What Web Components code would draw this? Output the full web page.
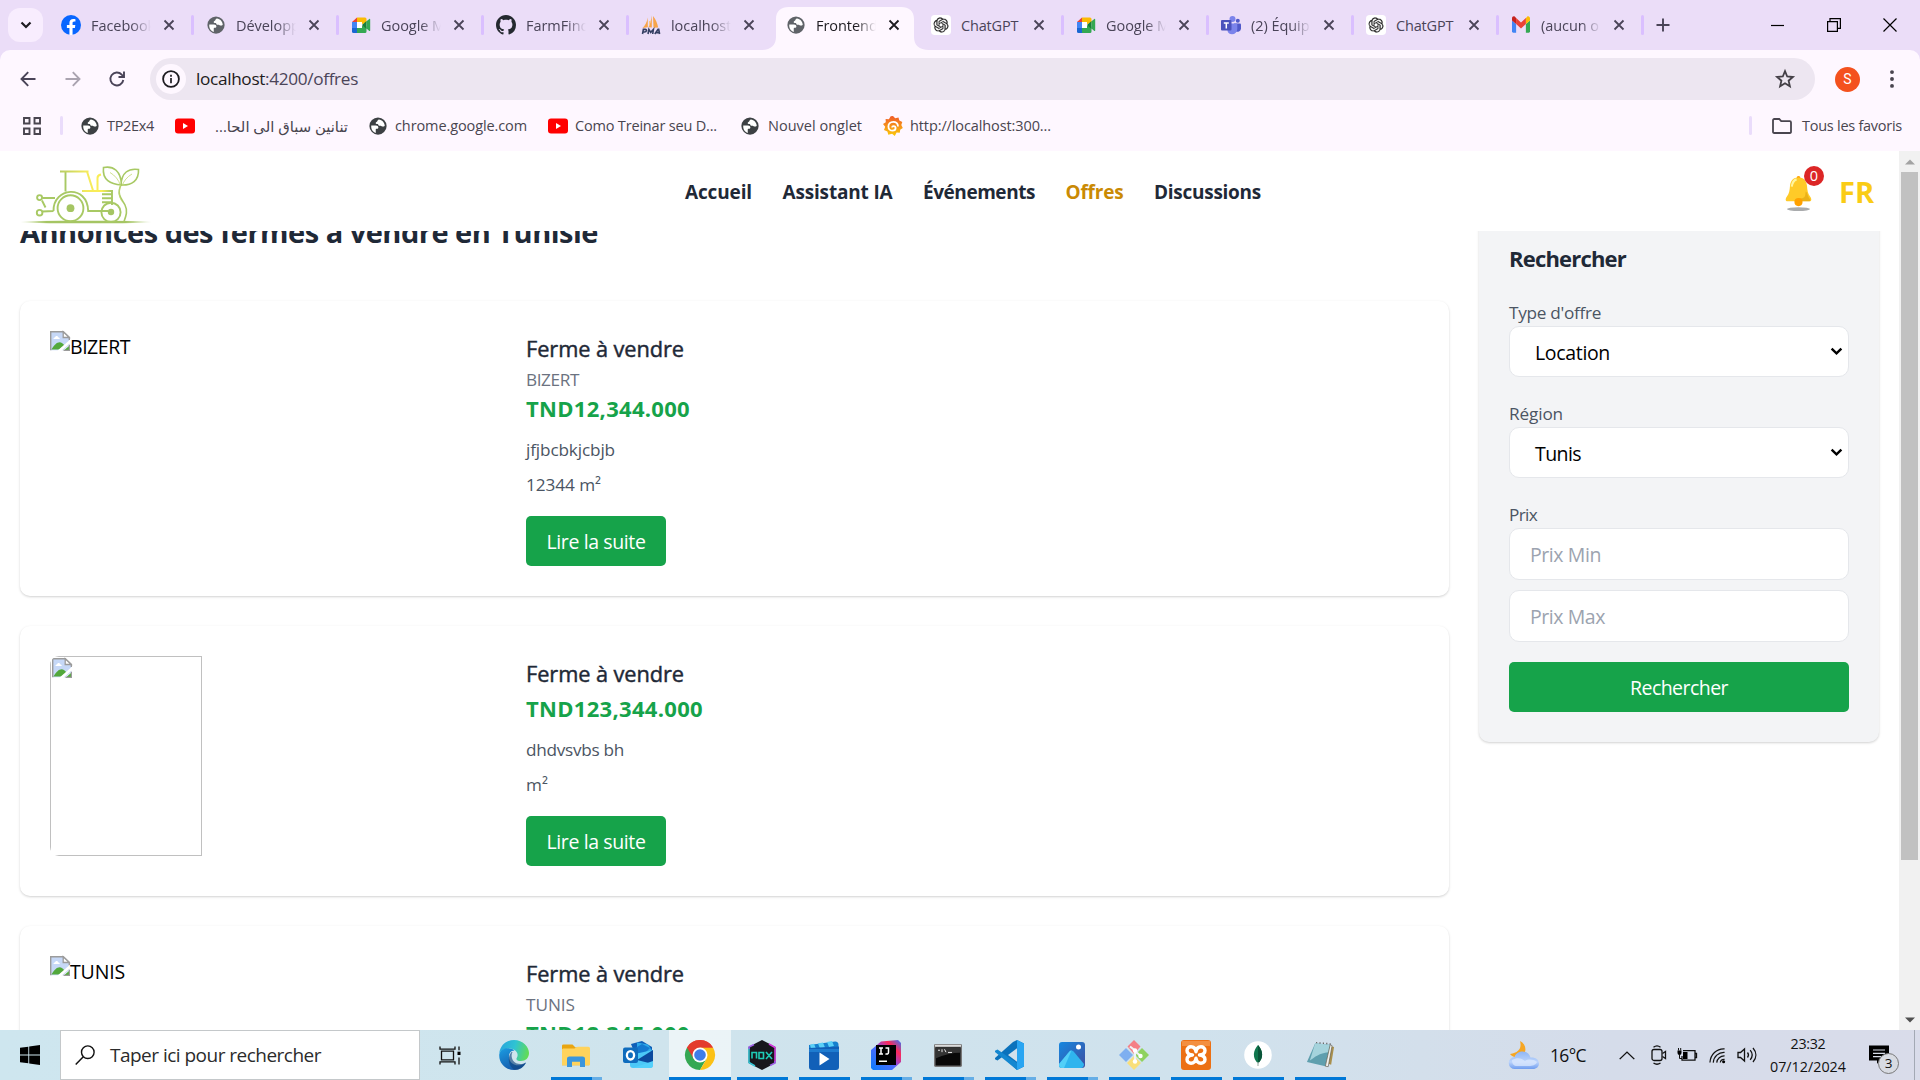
<!DOCTYPE html>
<html lang="fr">
<head>
<meta charset="utf-8">
<title>Frontend</title>
<style>
html,body{margin:0;padding:0;width:1920px;height:1080px;overflow:hidden;background:#fff;font-family:"Open Sans","Noto Sans","DejaVu Sans",sans-serif}
</style>
</head>
<body>
<desktop-screen></desktop-screen>
<script>
const def = (name, html, init) => customElements.define(name, class extends HTMLElement {
  connectedCallback() {
    if (this.shadowRoot) return;
    const root = this.attachShadow({ mode: 'open' });
    root.innerHTML = typeof html === 'function' ? html(this) : html;
    if (init) init(this, root);
  }
});

/* A single line of text: size in px, optional fitted width w, height h */
def('text-run', el => {
  const a = n => el.getAttribute(n);
  return `<style>:host{display:block;width:max-content;flex:none;white-space:nowrap;font-size:${a('size') || 16}px;
  font-weight:${a('weight') || 400};line-height:${a('h') || 24}px;height:${a('h') || 24}px;${a('color') ? 'color:' + a('color') : ''}}</style><slot></slot>`;
}, el => {
  const w = +el.getAttribute('w');
  if (!w) return;
  const n = [...el.textContent].length;
  const now = el.getBoundingClientRect().width;
  if (el.hasAttribute('scale')) el.style.fontSize = (+el.getAttribute('size') * w / now) + 'px';
  else el.style.letterSpacing = ((w - now) / n) + 'px';
  el.style.width = w + 'px';
});

const ICONS = {
  globe: `0 0 24 24|<circle cx="12" cy="12" r="11.5" fill="currentColor"/><path fill="#fff" d="M3 11.2h6.3c2 0 3.2 1.100 3.200 2.800 0 1-.7 1.700-1.900 1.700h-.8c-.5 0-.8.3-.8.8v4.700C5.500 20 2.500 16.500 3 11.200zM13.200 3.200c4.200.4 7.600 4 7.800 8.300-.6.9-1.400 1.300-2.500 1.300-1.600 0-1.900-1-2.900-1.200-.8-.2-1.700.2-2.600-.3-.8-.5-.5-1.600-1.400-2-.9-.4-2.200.2-2.600-.8-.4-1.100.9-1.700 1.700-2.400.7-.6.600-1.600 1.200-2.200.4-.4.800-.7 1.300-.7z"/>`,
  facebook: `0 0 24 24|<circle cx="12" cy="12" r="12" fill="#0866ff"/><path fill="#fff" d="M16.671 15.543l.532-3.47h-3.328V9.823c0-.949.465-1.874 1.956-1.874h1.513V4.996s-1.374-.235-2.686-.235c-2.741 0-4.533 1.662-4.533 4.669v2.642H7.078v3.47h3.047v8.385a12 12 0 0 0 3.75 0v-8.385z"/>`,
  github: `0 0 16 16|<path fill="#24292f" d="M8 0C3.580 0 0 3.580 0 8c0 3.540 2.290 6.530 5.470 7.590.4.070.55-.17.55-.38 0-.19-.01-.82-.01-1.490-2.010.37-2.530-.49-2.690-.94-.09-.23-.48-.94-.82-1.130-.28-.15-.68-.52-.01-.53.63-.01 1.080.58 1.230.82.72 1.210 1.870.87 2.330.66.07-.52.28-.87.51-1.070-1.780-.2-3.640-.89-3.640-3.950 0-.87.31-1.590.82-2.150-.08-.2-.36-1.020.08-2.120 0 0 .67-.21 2.200.82.64-.18 1.320-.27 2-.27s1.360.09 2 .27c1.530-1.040 2.200-.82 2.200-.82.44 1.100.16 1.920.08 2.120.51.56.82 1.270.82 2.150 0 3.070-1.870 3.750-3.650 3.950.29.25.54.73.54 1.480 0 1.070-.01 1.930-.01 2.200 0 .21.15.46.55.38A8.010 8.010 0 0 0 16 8c0-4.420-3.580-8-8-8z"/>`,
  meet: `0 0 20 20|<path fill="#fbbc04" d="M6 2.500h8a1.500 1.500 0 0 1 1.500 1.500v4l-4.500 1V7H6z"/><path fill="#ea4335" d="M6 2.500V7H1z"/><path fill="#4285f4" d="M1 7h5v6H1z"/><path fill="#1967d2" d="M1 13h5v5H2.500A1.500 1.500 0 0 1 1 16.500z"/><path fill="#34a853" d="M6 13h5v-2.500l4.500 1v5a1.500 1.500 0 0 1-1.500 1.500H6z"/><path fill="#188038" d="M11 10l4.500-4v8z"/><path fill="#34a853" d="M15.500 6.200l2.800-2.300c.4-.3.9 0 .9.5v11c0 .5-.5.8-.9.5l-2.800-2.300z"/><path fill="#fff" d="M6 7h5v6H6z"/>`,
  pma: `0 0 20 20|<path fill="#f7a54a" d="M6.800 2.500c-.8 4.500-2.600 8-5.300 10.500l5.300-.8zM10.800.3v12.200l-3.300-.2C9.200 8.500 10.300 4.500 10.800.3zM12 1c2.700 3.200 4.300 7 5.200 11.500l-4.700.2z"/><path fill="#fbc98a" d="M8 6v6l2-6z"/><g fill="none" stroke="#343f63" stroke-width="1.600"><path d="M1.500 19l.9-4.600h1.800c2 0 1.600 2.600-.6 2.600H2.200M7 19l.9-4.600 1.800 3 2.700-3L11.700 19M13.800 19l3.300-4.600h.6l.9 4.600M15 17.600h3.300"/></g>`,
  gpt: `-4 -4 32 32|<rect x="-4" y="-4" width="32" height="32" rx="6" fill="#fff"/><path fill="#222" stroke="#222" stroke-width=".3" d="M22.2819 9.8211a5.9847 5.9847 0 0 0-.5157-4.9108 6.0462 6.0462 0 0 0-6.5098-2.9A6.0651 6.0651 0 0 0 4.9807 4.1818a5.9847 5.9847 0 0 0-3.9977 2.9 6.0462 6.0462 0 0 0 .7427 7.0966 5.98 5.98 0 0 0 .511 4.9107 6.051 6.051 0 0 0 6.5146 2.9001A5.9847 5.9847 0 0 0 13.2599 24a6.0557 6.0557 0 0 0 5.7718-4.2058 5.9894 5.9894 0 0 0 3.9977-2.9001 6.0557 6.0557 0 0 0-.7475-7.0729zm-9.022 12.6081a4.4755 4.4755 0 0 1-2.8764-1.0408l.1419-.0804 4.7783-2.7582a.7948.7948 0 0 0 .3927-.6813v-6.7369l2.02 1.1686a.071.071 0 0 1 .038.052v5.5826a4.504 4.504 0 0 1-4.4945 4.4944zm-9.6607-4.1254a4.4708 4.4708 0 0 1-.5346-3.0137l.142.0852 4.783 2.7582a.7712.7712 0 0 0 .7806 0l5.8428-3.3685v2.3324a.0804.0804 0 0 1-.0332.0615L9.74 19.9502a4.4992 4.4992 0 0 1-6.1408-1.6464zM2.3408 7.8956a4.485 4.485 0 0 1 2.3655-1.9728V11.6a.7664.7664 0 0 0 .3879.6765l5.8144 3.3543-2.0201 1.1685a.0757.0757 0 0 1-.071 0l-4.8303-2.7865A4.504 4.504 0 0 1 2.3408 7.872zm16.5963 3.8558L13.1038 8.364 15.1192 7.2a.0757.0757 0 0 1 .071 0l4.8303 2.7913a4.4944 4.4944 0 0 1-.6765 8.1042v-5.6772a.79.79 0 0 0-.407-.667zm2.0107-3.0231l-.142-.0852-4.7735-2.7818a.7759.7759 0 0 0-.7854 0L9.409 9.2297V6.8974a.0662.0662 0 0 1 .0284-.0615l4.8303-2.7866a4.4992 4.4992 0 0 1 6.6802 4.66zM8.3065 12.863l-2.02-1.1638a.0804.0804 0 0 1-.038-.0567V6.0742a4.4992 4.4992 0 0 1 7.3757-3.4537l-.142.0805L8.704 5.459a.7948.7948 0 0 0-.3927.6813zm1.0976-2.3654l2.602-1.4998 2.6069 1.4998v2.9994l-2.5974 1.4997-2.6067-1.4997Z"/>`,
  teams: `0 0 20 20|<circle cx="16.800" cy="5.800" r="2" fill="#5059c9"/><path fill="#5059c9" d="M13 8.500h6a1 1 0 0 1 1 1v4a3.500 3.500 0 0 1-5 3z"/><circle cx="11.500" cy="4" r="3" fill="#7b83eb"/><path fill="#7b83eb" d="M7 8.500h8.500a.8.8 0 0 1 .8.8V14a5.300 5.300 0 0 1-5.300 5.300A5 5 0 0 1 6.500 16z"/><rect y="5" width="10.500" height="10.500" rx="1" fill="#4b53bc"/><path stroke="#fff" stroke-width="1.500" d="M2.800 8h5M5.300 8v5.500" fill="none"/>`,
  gmail: `0 0 24 20|<path fill="#4285f4" d="M1.600 18.500h3.900V9L0 4.900v12a1.600 1.600 0 0 0 1.600 1.600z"/><path fill="#34a853" d="M18.500 18.500h3.900A1.600 1.600 0 0 0 24 16.900v-12L18.500 9z"/><path fill="#fbbc04" d="M18.500 2.500V9L24 4.900V2.700C24 .7 21.700-.5 20.100.7z"/><path fill="#ea4335" d="M5.500 9V2.200L12 7.100l6.500-4.900V9L12 13.900z"/><path fill="#c5221f" d="M0 2.700v2.200L5.500 9V2.200L3.900.9C2.300-.3 0 .7 0 2.700z"/>`,
  x: `0 0 12 12|<path d="M1.500 1.500l9 9M10.500 1.500l-9 9" stroke="currentColor" stroke-width="1.800" fill="none"/>`,
  plus: `0 0 14 14|<path d="M7 .5v13M.5 7h13" stroke="currentColor" stroke-width="1.900"/>`,
  down: `0 0 12 8|<path d="M1.500 1.500L6 6l4.500-4.500" stroke="currentColor" stroke-width="2.200" fill="none"/>`,
  min: `0 0 14 14|<path d="M0 7.500h13" stroke="#000" stroke-width="1.200"/>`,
  restore: `0 0 14 14|<path d="M.6 3.600h9.800v9.800H.6zM3 3.500V.6h10.400v9.800h-2.900" fill="none" stroke="#000" stroke-width="1.200"/>`,
  close: `0 0 14 14|<path d="M.5.5l13 13M13.500.5l-13 13" stroke="#000" stroke-width="1.200"/>`,
  back: `0 0 16 16|<path d="M15.500 8H1.500M8.200 1.200L1.500 8l6.700 6.800" fill="none" stroke="currentColor" stroke-width="1.900"/>`,
  fwd: `0 0 16 16|<path d="M.5 8h14M7.800 1.200L14.500 8l-6.700 6.800" fill="none" stroke="currentColor" stroke-width="1.900"/>`,
  reload: `0 0 16 16|<path d="M14.300 9a6.500 6.500 0 1 1-1.600-5.400L14.500 5.500M15 .5V6H9.500" fill="none" stroke="currentColor" stroke-width="1.900"/>`,
  info: `0 0 18 18|<circle cx="9" cy="9" r="7.900" fill="none" stroke="#1d1b20" stroke-width="1.800"/><path d="M9 8v5.200M9 4.800v1.900" stroke="#1d1b20" stroke-width="1.700"/>`,
  star: `0 0 20 20|<path d="M10 2.200l2.200 5.300 5.700.5-4.300 3.700 1.300 5.600-4.900-3-4.900 3 1.300-5.600L2.100 8l5.700-.5z" fill="none" stroke="#444047" stroke-width="1.800"/>`,
  dots: `0 0 4 18|<g fill="#49454f"><circle cx="2" cy="2.100" r="1.950"/><circle cx="2" cy="9" r="1.950"/><circle cx="2" cy="15.900" r="1.950"/></g>`,
  apps: `0 0 18 18|<path d="M1 1h5.500v5.500H1zM11.500 1H17v5.500h-5.500zM1 11.500h5.500V17H1zM11.500 11.500H17V17h-5.500z" fill="none" stroke="#49454f" stroke-width="1.900"/>`,
  youtube: `0 0 20 14|<rect y="-.5" width="20" height="15" rx="3" fill="#f00"/><path d="M8 4v6l5-3z" fill="#fff"/>`,
  grafana: `0 0 20 20|<defs><linearGradient id="g" x1="0" y1="0" x2="0" y2="1"><stop stop-color="#f05a28"/><stop offset="1" stop-color="#fbca0a"/></linearGradient></defs><path fill="url(#g)" d="M10 0l2.200 2.200 3.300-.8.8 3 3 1.600-1 3 1.500 3-2.600 1.700-.4 3-3.200-.2L11.800 20l-2.700-2.200-3.800 1-.9-3.300L1 14l1.200-3.200L0 8l2.800-1.800L2.600 3l3.300.2L7.700.2z"/><path d="M15 10.500c0-3-2.300-4.700-4.700-4.700-3 0-4.900 2-4.900 4.600 0 2.700 2 4.300 4.200 4.300 2 0 3-1.300 3-2.600 0-1.200-.9-2-2-2-1 0-1.500.7-1.500 1.300" fill="none" stroke="#fff" stroke-width="1.800"/>`,
  folder: `0 0 20 16|<path d="M1 14V2.200A1.200 1.200 0 0 1 2.200 1h5l2 2.200h8.600A1.200 1.200 0 0 1 19 4.400V14a1 1 0 0 1-1.200 1H2.200A1.100 1.100 0 0 1 1 14z" fill="none" stroke="#49454f" stroke-width="1.800"/>`,
  broken: `0 0 20 20|<path d="M.7.7h12.600l6 5.600v8L13 19.300H.7z" fill="#c6d8f7"/><path d="M.7 19.300V.7h12.600l6 5.600V9" fill="none" stroke="#9b9b9b" stroke-width="1.400"/><path d="M13.200.7v5.800h6z" fill="#fff" stroke="#9b9b9b" stroke-width="1.300"/><path d="M3.500 8c0-1.300 1-1.600 1.500-1.500.3-2 3-2 3.300 0 .8-.1 1.500.5 1.500 1.500z" fill="#fff"/><path d="M1.400 18.600C4 14 7 11.300 9.500 11.300c2 0 3.700 1.400 5 3.200l-5 4.100z" fill="#52a83c"/><path d="M8.500 20.500l12-10.500" stroke="#fff" stroke-width="2.600"/><path d="M14 19.300h5.300v-4.600z" fill="#52a83c"/><path d="M13.500 19.400h5.900v-5.600" fill="none" stroke="#9b9b9b" stroke-width="1.200"/>`,
  tractor: `16 160 140 66|<defs><linearGradient id="gd" gradientUnits="userSpaceOnUse" x1="20" y1="0" x2="152" y2="0"><stop stop-color="#a5c563" stop-opacity="0"/><stop offset=".2" stop-color="#a5c563"/><stop offset=".8" stop-color="#a5c563"/><stop offset="1" stop-color="#a5c563" stop-opacity="0"/></linearGradient><linearGradient id="cb" gradientUnits="userSpaceOnUse" x1="60" y1="0" x2="112" y2="0"><stop stop-color="#b7cd62"/><stop offset=".5" stop-color="#f4ea5c"/><stop offset=".8" stop-color="#fbee55"/><stop offset="1" stop-color="#a8c864"/></linearGradient></defs>
   <ellipse cx="86" cy="222" rx="66" ry="1.300" fill="url(#gd)"/><g fill="none" stroke="#a8c964" stroke-width="1.900"><circle cx="70.500" cy="208.200" r="12.900"/><circle cx="111" cy="212.300" r="9.600"/><path d="M53.500 211c-.5-24 34-27 34.700 0H108M65.500 171v20.500M42.500 198H55M42 200.500l3.500 7M42.500 211.500l11-.5M112 190v15M102 194.300h9.500M102 198.300h9.500M102 202.300h9.500"/><circle cx="39.600" cy="197.600" r="2.500"/><circle cx="39.600" cy="212.700" r="2.800"/><path d="M103.500 167.500c10-2 17.500 3.500 18 17.500-11-1-19.500-5-18-17.500zM138.500 169.500c-10-1.500-17 3-17.500 15.500 11 .5 18-4.500 17.500-15.500zM121 185c-5 10 1.500 15 4 20 3 6 1 11-1 16.500" stroke-width="1.600"/><path d="M110 172.500c5 3 8.500 7 10.500 13-1.500 6-2 11 1.500 16M132 174c-5 3-8 6.500-10 12" stroke-width=".8" stroke="#c4d873"/></g><g fill="#a5c563"><circle cx="70.500" cy="208.200" r="3.900"/><circle cx="111" cy="212" r="3.200"/></g>
   <path d="M60 171.500h28.500M87 171.500l6 19M82 191h30.500M97.500 191v-13c0-2 1-3 3.500-3.500" fill="none" stroke="url(#cb)" stroke-width="2"/>`,
  bell: `0 0 28 38|<ellipse cx="14" cy="35" rx="12" ry="2" fill="#a9abad"/><circle cx="14" cy="3" r="2" fill="#ffa000"/><path d="M14 2.500c5.500 0 8.300 3.500 8.800 8.500.4 5 .8 8 3.200 11 1.500 2 2.200 5-1 5H3c-3.200 0-2.500-3-1-5 2.400-3 2.800-6 3.200-11 .5-5 3.300-8.500 8.800-8.500z" fill="#ffca28"/><path d="M21.500 17c2 1 1.500 4 3.500 6.500 1.500 2 1.500 3.500-.5 3.500H9.500c1.500-2 5-3 8.500-3 3.500-1 3-4 3.500-7z" fill="#e2a610" opacity=".7"/><path d="M7 12c.5-4 2-6.500 5-7.500" fill="none" stroke="#fff59d" stroke-width="2.200"/><circle cx="14" cy="27.800" r="4.200" fill="#ffa000"/>`,
  windows: `0 0 20 20|<path d="M0 2.800L8.300 1.700v7.800H0zM9.200 1.500L20 0v9.500H9.200zM0 10.400h8.300v7.900L0 17.200zM9.200 10.400H20V20L9.200 18.500z"/>`,
  search: `0 0 20 20|<circle cx="12.800" cy="7.200" r="6.300" fill="none" stroke="#111" stroke-width="1.400"/><path d="M8.300 11.800L.7 19.500" stroke="#111" stroke-width="1.500"/>`,
  taskview: `0 0 22 20|<path d="M2.500 5.500h12v9h-12zM1 .5v2.700h15V.5M1 19.500v-2.700h15v2.700M20 .5v4M20 12v7.500" fill="none" stroke="#111" stroke-width="1.300"/><path d="M18.500 6h3v3.500h-3z"/>`,
  edge: `0 0 30 30|<defs><linearGradient id="e1" x1="0" y1=".3" x2="1" y2=".5"><stop stop-color="#2aa5dc"/><stop offset=".5" stop-color="#2fc3d3"/><stop offset="1" stop-color="#62dc54"/></linearGradient><linearGradient id="e2" x1="0" y1="0" x2=".6" y2="1"><stop stop-color="#1b9de2"/><stop offset="1" stop-color="#1556a8"/></linearGradient></defs><path d="M.3 13.500C1 5.500 7 0 15 0c9 0 15 7 15 13 0 5-3.500 8-8 8-4 0-5.500-1.500-4-3.500 2-4-1-8.500-7-9-5-.2-9 2-10.700 5z" fill="url(#e1)"/><path d="M.3 14C2 8 11 6.500 15.500 10.500c-5 0-6.500 5-5 9C12 24.500 19 28 27 22.500c-2 4.500-6.500 7.500-12 7.500C6 30-.5 22.500.3 14z" fill="url(#e2)"/><path d="M12.500 12C8 17 9 26.500 16 30c5 0 9-3 11-7.500-5 3-10.500 1.500-13-2-1.500-2.500-2-6-.5-8.500z" fill="#11467f" opacity=".65"/>`,
  explorer: `0 0 28 26|<path d="M0 2a1.500 1.500 0 0 1 1.500-1.500h9L13.500 4H27v20H0z" fill="#e9a511"/><path d="M1 5h11.500l3-2h10.800A1.700 1.700 0 0 1 28 4.700V24H0V6z" fill="#ffd35c"/><path d="M5 26v-9.500a2.500 2.500 0 0 1 2.500-2.500h13a2.500 2.500 0 0 1 2.500 2.500V26h-5v-6h-8v6z" fill="#3a96dd"/>`,
  outlook: `0 0 30 30|<path d="M8 4L19 1l10 6v6L14 19z" fill="#0f5fb8"/><path d="M14 2.500l11 2 4 6-15 8z" fill="#2da8e8"/><path d="M9 10l10-6 8 4-9 9z" fill="#1479d0"/><path d="M7 15l23-5v15a3 3 0 0 1-3 3H10a3 3 0 0 1-3-3z" fill="#4bc8f7"/><path d="M30 10L14 20l16 4z" fill="#0c4a9e"/><path d="M10 28l20-7v4c0 2-1 3-3 3z" fill="#53d0fb"/><rect y="7.500" width="15" height="15.500" rx="2" fill="#0f6cbd"/><ellipse cx="7.500" cy="15.300" rx="3.600" ry="4.200" fill="none" stroke="#fff" stroke-width="2.300"/>`,
  chrome: `0 0 30 30|<path d="M15 15L2 7.500A15 15 0 0 1 28 7.500z" fill="#ea4335"/><path d="M15 15L2 7.500A15 15 0 0 0 15 30l6.500-11.200z" fill="#34a853"/><path d="M15 15V7.500h13A15 15 0 0 1 15 30l6.500-11z" fill="#fbc116"/><path d="M2 7.500l6.600 11.300L15 7.500h13A15 15 0 0 0 2 7.500z" fill="#e33b2e"/><circle cx="15" cy="15" r="7.500" fill="#fff"/><circle cx="15" cy="15" r="5.800" fill="#3f7de8"/>`,
  nox: `0 0 30 30|<path d="M15 0l13.500 7v16L15 30 1.500 23V7z" fill="#17171c"/><path d="M2 7.500v15L8 26" fill="none" stroke="#36c8d8" stroke-width="1.500"/><path d="M28 22.500v-15L22 4" fill="none" stroke="#d73be0" stroke-width="1.500"/><path d="M2 9V7l5-2.500M28 21v2l-5 2.500" fill="none" stroke="#a060e8" stroke-width="1.500"/><path d="M5 18.500v-6h4.500v6M12 12.500h4.500v6H12zM19 12l6 7M25 12l-6 7" fill="none" stroke="#1ecbb6" stroke-width="1.600"/>`,
  film: `0 0 30 30|<path d="M0 5L26 1.500a3 3 0 0 1 3.500 3V10H0z" fill="#1580ce"/><path d="M1 4.800l4-1 2 5H2zM9 3.400l5-1 2 5-5 1zM18 2l5-1 2 5-5 1z" fill="#5bd0f7"/><path d="M0 8l30-1.500V27a3 3 0 0 1-3 3H3a3 3 0 0 1-3-3z" fill="#1160b8"/><path d="M0 9h30v3H0z" fill="#1e7cd0"/><path d="M10.500 12.500v13L20.500 19z" fill="#fff"/>`,
  idea: `0 0 30 30|<defs><linearGradient id="ij" x1="0" y1="1" x2="1" y2="0"><stop stop-color="#087cfa"/><stop offset=".45" stop-color="#4c6bfd"/><stop offset=".55" stop-color="#a043c8"/><stop offset=".75" stop-color="#fe2857"/><stop offset="1" stop-color="#2d7bff"/></linearGradient></defs><path d="M0 10L10 1.500 27 0l3 3v19l-9 8H2l-2-2z" fill="url(#ij)"/><path d="M5 5h20v20H5z" fill="#000"/><path d="M8 8h4M10 8v6M8 14h4M14.500 8h3v4.500c0 1.500-1.500 2-3 1.300M8 21.200h8" fill="none" stroke="#fff" stroke-width="1.500"/>`,
  cmd: `0 0 28 24|<rect width="28" height="24" rx="1.500" fill="#777"/><path d="M1.500 3.500h25v19h-25z" fill="#080808"/><path d="M1.500 4h25v5c-8 0-17 2-25 6z" fill="#343434"/><path d="M1 .8h26v2H1z" fill="#ddd"/><path d="M4 6.500h2M8 5.500v3M10.500 5.500l1.500 3M14 8.800h4" stroke="#eee" stroke-width="1"/>`,
  vscode: `0 0 30 30|<path d="M22 0l7 3.400v23.200L22 30 7.500 16.700 2.500 20.500 0 19.200V18L18 2z" fill="#0b72bc"/><path d="M0 10.800l2.500-1.400L22 23v7L0 12z" fill="#1487d0"/><path d="M22 0l7 3.400v23.200L22 30z" fill="#29a5f2"/><path d="M22 8.300v13.400L13 15z" fill="#d2e0ec"/>`,
  photos: `0 0 28 28|<defs><linearGradient id="ph" x1="0" y1="0" x2="1" y2="1"><stop stop-color="#1688e0"/><stop offset="1" stop-color="#3e4da0"/></linearGradient></defs><rect x="1" y="1" width="26" height="26" rx="3" fill="url(#ph)"/><path d="M1 23l10-12c2-2 3-2 5 0l10 12c0 2-1 4-3 4H4a3 3 0 0 1-3-3z" fill="#2fb4ee"/><path d="M1 23l10-12c1-1 2-1.500 2.500-1.400L6 27H4a3 3 0 0 1-3-3z" fill="#52cff8"/><circle cx="20.500" cy="6" r="2.500" fill="#fff"/>`,
  git: `0 0 30 30|<path d="M15 0l6.500 6.500L15 14 8.500 6.500z" fill="#f57f86"/><path d="M7 8l7 7-7 7-7-7z" fill="#7eaff0"/><path d="M23 8l7 7-7 7-7-7z" fill="#8fd25f"/><path d="M15 16l7 7-7 7-7-7z" fill="#f9df7a"/><path d="M11 6.500l5 4v11M16 11l5.500 5" fill="none" stroke="#f0f3f6" stroke-width="2.200"/><g fill="#fff"><circle cx="16" cy="10.500" r="2.200"/><circle cx="21.500" cy="16" r="2.200"/><circle cx="16" cy="21.500" r="2.200"/></g>`,
  xampp: `0 0 30 30|<rect width="30" height="30" rx="3" fill="#ec7014"/><path d="M1 1h28v5H1z" fill="#f9a45f" opacity=".6"/><path d="M11.500 15C7 14.500 6 12.500 6 10.500 6 8 8 6.800 10 6.800c2.500 0 4.500 1.700 5 5 .5-3.300 2.500-5 5-5 2 0 4 1.200 4 3.700 0 2-1 4-5.500 4.500 4.500.5 5.500 2.500 5.500 4.500 0 2.500-2 3.700-4 3.700-2.500 0-4.500-1.700-5-5-.5 3.300-2.500 5-5 5-2 0-4-1.200-4-3.700 0-2 1-4 5.500-4.500z" fill="none" stroke="#fff" stroke-width="3.400" stroke-linejoin="round"/>`,
  mongo: `0 0 28 28|<circle cx="14" cy="14" r="13.800" fill="#fff"/><path d="M14 4c5 5.500 6 13 0 18.500C8 17 9 9.500 14 4z" fill="#10774e"/><path d="M14 4c5 5.500 6 13 0 18.500z" fill="#0a5539"/><path d="M14 21v4" stroke="#aebbb4" stroke-width="1.300"/>`,
  notepad: `0 0 30 30|<path d="M24 5l5 1.500-3 19-5-2z" fill="#a98f4c"/><path d="M9.500 2.500L25 4l-5 23L1 22.500z" fill="#5f9fae"/><path d="M9.500 2.500L25 4l-2 8C14 13 9 17 4 21z" fill="#a5d3dc"/><path d="M20 27l5-23 2 1-4 22.500z" fill="#f2f1ec" stroke="#5c5a50" stroke-width=".7"/><path d="M11 2.500v-1.500M14.500 3V1.300M18 3.200V1.600M21.500 3.500V2M25 4V2.500" stroke="#666" stroke-width="1.200"/>`,
  weather: `0 0 30 30|<defs><linearGradient id="cl" x1="0" y1="0" x2="0" y2="1"><stop stop-color="#8fb6f6"/><stop offset=".6" stop-color="#bcd4fb"/><stop offset="1" stop-color="#6f9df0"/></linearGradient></defs><path d="M11 1c6 3 7 10 3 14s-10 3-13-1c9-1 12-6 10-13z" fill="#f6a623"/><path d="M6 29a6 6 0 0 1-.5-12c1.500-4 5-5.500 8-5.500 4 0 7 2.500 8 6 4-.5 8.500 1.500 8.500 6 0 3-2.500 5.500-6 5.500z" fill="url(#cl)"/><path d="M3 20c5-3 10-2 13 1 3-2 8-2 12 1-1 3-5 4-8 4H8c-3 0-5-2-5-6z" fill="#dbe8fd" opacity=".75"/>`,
  chevup: `0 0 16 10|<path d="M.7 9L8 1.300 15.300 9" fill="none" stroke="#111" stroke-width="1.400"/>`,
  cam: `0 0 16 20|<rect x="1" y="4.500" width="10" height="11" rx="2" fill="none" stroke="#111" stroke-width="1.300"/><path d="M11.500 8.500l3-2v7l-3-2M2.500 2.200c2-1.600 5-1.600 7 0M2.500 18c2 1.400 5 1.400 7 0" fill="none" stroke="#111" stroke-width="1.300"/>`,
  battery: `0 0 20 16|<path d="M6 3.700h12v9.500H5V9M18.500 6.500h1v4h-1" fill="none" stroke="#111" stroke-width="1.300"/><path d="M6 5h4.500v7H6zM.5 3.500h4V6a2 2 0 0 1-4 0z"/><path d="M1.500 1v2.500M3.700 1v2.500M2.500 8v3.500H5" fill="none" stroke="#111"/>`,
  wifi: `0 0 18 18|<g fill="none" stroke="#111" stroke-width="1.300"><path d="M1 16.500C1.500 8 8 1.500 16.500 2M4.500 16.500C5 10 10 5.500 16.500 5.800M8.200 16.500c.3-4 4-7.200 8.300-7M12 16.500c.1-2 2-3.500 4.500-3.400"/></g><circle cx="15.500" cy="15.500" r="1.600"/>`,
  volume: `0 0 20 16|<path d="M1 5.500h2.500L7.500 2v12l-4-3.500H1zM10.500 5.500c1.200 1.500 1.200 3.500 0 5M13.200 3.200c2.500 3 2.500 6.600 0 9.600M16 1c3.800 4.300 3.800 9.700 0 14" fill="none" stroke="#111" stroke-width="1.300"/>`,
  notif: `0 0 20 20|<path d="M0 .5h20v15h-9.500L8 19v-3.500H0z"/><path d="M4 5h12M4 8.300h12M4 11.600h8" stroke="#d7dce8" stroke-width="1.200"/>`,
  tabshape: `0 0 169 43|<path d="M0 43c10 0 15-5 15-13V12C15 4 20 0 28 0h112c8 0 13 4 13 12v18c0 8 5 13 15 13z" fill="#fef7ff"/>`,
  up: `0 0 10 6|<path d="M0 5.500L5 .5l5 5z" fill="#a3a3a3"/>`,
  dn: `0 0 10 6|<path d="M0 .5l5 5 5-5z" fill="#505050"/>`
};
/* Inline SVG icon: name, width w, height h */
def('ui-icon', el => {
  const [vb, body] = ICONS[el.getAttribute('name')].split('|');
  const w = el.getAttribute('w') || 20, h = el.getAttribute('h') || w;
  return `<style>:host{display:block;flex:none;width:${w}px;height:${h}px}svg{display:block;overflow:visible}</style>
  <svg width="${w}" height="${h}" viewBox="${vb}" preserveAspectRatio="none">${body}</svg>`;
});

def('browser-tab', el => {
  const act = el.hasAttribute('active');
  return `<style>
  :host{display:flex;align-items:center;box-sizing:border-box;width:145px;height:50px;padding:0 0 0 13px;position:relative;flex:none;color:${act ? '#1d1b20' : '#4a4458'}}
  .i{width:20px;display:flex;justify-content:center;z-index:1;margin-right:10px;color:#5f6368}
  .t{width:63px;padding-top:1px;overflow:hidden;z-index:1;letter-spacing:-.05px;-webkit-mask:linear-gradient(90deg,#000 40px,transparent 60px);mask:linear-gradient(90deg,#000 40px,transparent 60px)}
  .t.full{-webkit-mask:none;mask:none}
  .c{margin-left:9px;z-index:1}
  .sep{position:absolute;right:-1px;top:15px;width:3px;height:20px;border-radius:2px;background:#dabfff}
  .bg{position:absolute;left:-12px;top:7px}
  </style>${act ? '<ui-icon class="bg" name="tabshape" w="169" h="43"></ui-icon>' : ''}
  <div class="i"><ui-icon name="${el.getAttribute('icon')}" w="${el.getAttribute('iw') || 20}"></ui-icon></div>
  <div class="t ${el.hasAttribute('w') ? 'full' : ''}"><text-run size="14.500" h="24" ${el.hasAttribute('w') ? `w="${el.getAttribute('w')}"` : ''}>${el.getAttribute('label')}</text-run></div>
  <ui-icon class="c" name="x" w="12"></ui-icon>${el.hasAttribute('nosep') ? '' : '<div class="sep"></div>'}`;
});

def('tab-strip', `<style>
:host{display:flex;align-items:center;height:50px;background:#ebddf8;flex:none}
.m{width:35px;height:34px;border-radius:12px;background:#f8edfe;margin:0 5px 0 8px;display:flex;align-items:center;justify-content:center;color:#1d1b20}
.p{margin-left:13px;color:#4a4458}.w{margin-left:101px;display:flex;gap:42px}
</style>
<div class="m"><ui-icon name="down" w="12" h="8"></ui-icon></div>
<browser-tab icon="facebook" label="Facebook"></browser-tab>
<browser-tab icon="globe" iw="18" label="Développ"></browser-tab>
<browser-tab icon="meet" label="Google M"></browser-tab>
<browser-tab icon="github" label="FarmFind"></browser-tab>
<browser-tab icon="pma" label="localhost" nosep></browser-tab>
<browser-tab icon="globe" iw="18" label="Frontend" active nosep></browser-tab>
<browser-tab icon="gpt" label="ChatGPT" w="57"></browser-tab>
<browser-tab icon="meet" label="Google M"></browser-tab>
<browser-tab icon="teams" label="(2) Équip"></browser-tab>
<browser-tab icon="gpt" label="ChatGPT" w="57"></browser-tab>
<browser-tab icon="gmail" iw="18" label="(aucun o"></browser-tab>
<ui-icon class="p" name="plus" w="14"></ui-icon>
<div class="w"><ui-icon name="min" w="14"></ui-icon><ui-icon name="restore" w="14"></ui-icon><ui-icon name="close" w="14"></ui-icon></div>`);

def('address-bar', `<style>
:host{display:block;height:50px;background:#ebddf8;flex:none}
.r{height:50px;display:flex;align-items:center;background:#fef7ff;border-radius:10px 10px 0 0;padding:8px 0 0 20px;box-sizing:border-box;color:#4a4458}
.o{height:42px;width:1665px;box-sizing:border-box;border-radius:21px;background:#ede6f1;display:flex;align-items:center;margin-left:25px;padding:0 20px 0 6px}
.n{width:30px;height:30px;border-radius:50%;background:#fef7ff;display:flex;align-items:center;justify-content:center;margin-right:10px}
.a{width:25px;height:25px;border-radius:50%;background:#f4511e;margin:0 30px 0 20px;display:flex;justify-content:center}
.u{flex:1;display:flex}b{font-weight:400;color:#1d1b20}
</style><div class="r">
<ui-icon name="back" w="16"></ui-icon><ui-icon name="fwd" w="16" style="margin-left:29px;color:#aaa3b0"></ui-icon><ui-icon name="reload" w="16" style="margin-left:28px"></ui-icon>
<div class="o"><div class="n"><ui-icon name="info" w="18"></ui-icon></div><div class="u"><text-run size="17.200" w="162" color="#4a4458"><b>localhost</b>:4200/offres</text-run></div><ui-icon name="star" w="20"></ui-icon></div>
<div class="a"><text-run size="14" h="25" color="#fff" style="font-family:Roboto">S</text-run></div><ui-icon name="dots" w="4" h="18"></ui-icon></div>`);

def('bookmark-bar', `<style>
:host{display:flex;align-items:center;height:51px;background:#fef7ff;flex:none;box-sizing:border-box;padding:0 18px 0 23px;color:#49454f}
.s{width:3px;height:19px;border-radius:2px;background:#eadcfb}.g{color:#3c4043}
</style>
<ui-icon name="apps" w="18"></ui-icon><div class="s" style="margin:0 18px 0 19px"></div>
<ui-icon class="g" name="globe" w="18"></ui-icon><text-run size="14.500" w="47" style="margin-left:8px">TP2Ex4</text-run>
<ui-icon name="youtube" w="20" h="14" style="margin-left:21px"></ui-icon><text-run size="14" w="133" scale dir="rtl" style="margin-left:20px">تنانين سباق الى الحا...</text-run>
<ui-icon class="g" name="globe" w="18" style="margin-left:21px"></ui-icon><text-run size="14.500" w="132" style="margin-left:8px">chrome.google.com</text-run>
<ui-icon name="youtube" w="20" h="14" style="margin-left:21px"></ui-icon><text-run size="14.500" w="142" style="margin-left:7px">Como Treinar seu D...</text-run>
<ui-icon class="g" name="globe" w="18" style="margin-left:24px"></ui-icon><text-run size="14.500" w="94" style="margin-left:9px">Nouvel onglet</text-run>
<ui-icon name="grafana" w="20" style="margin-left:21px"></ui-icon><text-run size="14.500" w="141" style="margin-left:7px">http://localhost:300...</text-run>
<div class="s" style="margin-left:auto"></div><ui-icon name="folder" w="20" h="16" style="margin:0 10px 0 20px"></ui-icon><text-run size="14.500" w="100">Tous les favoris</text-run>`);

def('site-header', `<style>
:host{display:flex;align-items:center;height:80px;background:#fff;box-sizing:border-box;padding-left:16px;flex:none;position:relative;z-index:2;color:#1f2937}
nav{display:flex;gap:30.500px;margin:1px 0 0 529px}
.logo{align-self:flex-start;margin-top:9px}
.bell{position:relative;margin:4px 27px 0 auto}
.badge{position:absolute;left:19px;top:-9px;width:20px;height:20px;border-radius:50%;background:#dc2626;display:flex;justify-content:center}
.fr{margin:2px 25px 0 0}
</style><ui-icon class="logo" name="tractor" w="140" h="66"></ui-icon>
<nav><text-run size="19" weight="700" w="67">Accueil</text-run><text-run size="19" weight="700" w="110">Assistant IA</text-run><text-run size="19" weight="700" w="112">Événements</text-run><text-run size="19" weight="700" w="58" color="#ca8a04">Offres</text-run><text-run size="19" weight="700" w="107">Discussions</text-run></nav>
<div class="bell"><ui-icon name="bell" w="27" h="37"></ui-icon><div class="badge"><text-run size="14.500" h="20" color="#fff">0</text-run></div></div>
<text-run class="fr" size="29" weight="700" h="36" w="35" color="#facc15">FR</text-run>`);

/* Green action button */
def('green-button', el => `<style>:host{display:flex;justify-content:center;width:${el.getAttribute('bw')}px;height:50px;border-radius:5px;background:#16a34a;color:#fff}</style>
<text-run size="19.500" h="52" w="${el.getAttribute('w')}">${el.getAttribute('label')}</text-run>`);

def('offer-card', el => {
  const a = n => el.getAttribute(n), place = a('place');
  return `<style>
  :host{display:flex;box-sizing:border-box;width:1429px;min-height:270px;padding:30px;border-radius:10px;background:#fff;box-shadow:0 1px 3px rgba(0,0,0,.13),0 1px 2px rgba(0,0,0,.06);flex:none}
  .pic{width:476px;height:200px;display:flex;align-items:flex-start}
  .clip{overflow:hidden;border-radius:9px 0 0 9px}
  .box{width:150px;height:198px;box-sizing:content-box;border:1px solid #c0c0c0}
  .box ui-icon{margin:1px 0 0 1px}
  .name{-webkit-text-stroke:.45px #1f2937}
  </style><div class="pic">${place ? `<ui-icon name="broken" w="20"></ui-icon><text-run size="19.500" h="32" w="${a('aw')}">${place}</text-run>` : '<div class="clip"><div class="box"><ui-icon name="broken" w="20"></ui-icon></div></div>'}</div>
  <div><text-run class="name" size="21.800" h="36" w="158" color="#1f2937">Ferme à vendre</text-run>
  ${place ? `<text-run size="17.200" h="25" w="${a('pw')}" color="#6b7280">${place}</text-run>` : ''}
  <text-run size="22" weight="700" h="33" w="${a('cw')}" color="#16a34a">${a('cost')}</text-run>
  ${a('desc') ? `<text-run size="17.200" h="29" w="${a('dw')}" color="#4b5563" style="margin-top:10px">${a('desc')}</text-run>
  <text-run size="17.200" h="41" w="${a('mw')}" color="#4b5563">${a('area')}</text-run>
  <green-button bw="140" w="99" label="Lire la suite" style="margin-top:11px"></green-button>` : ''}</div>`;
});

def('form-field', el => {
  const a = n => el.getAttribute(n), sel = el.hasAttribute('select');
  return `<style>:host{display:flex;box-sizing:border-box;width:340px;height:${sel ? 51 : 52}px;border:1px solid #e5e7eb;border-radius:10px;background:#fff;align-items:center;justify-content:space-between;padding:0 5px 0 ${sel ? 25 : 20}px;color:${sel ? '#000' : '#9ca3af'}}text-run{padding-top:2px}</style>
  <text-run size="19.500" h="28" w="${a('w')}">${a('value')}</text-run>${sel ? '<ui-icon name="down" w="13" h="8.500"></ui-icon>' : ''}`;
});

def('search-panel', `<style>
:host{display:block;box-sizing:border-box;width:400px;height:531px;padding:31px 30px 0 30px;background:#f3f4f6;border-radius:10px;box-shadow:0 1px 3px rgba(0,0,0,.13),0 1px 2px rgba(0,0,0,.06);color:#4b5563}
</style>
<text-run size="22" weight="700" h="32" w="117" color="#1f2937">Rechercher</text-run>
<text-run size="17.200" h="26" w="92" style="margin-top:26px">Type d'offre</text-run><form-field select value="Location" w="75"></form-field>
<text-run size="17.200" h="26" w="54" style="margin-top:24px">Région</text-run><form-field select value="Tunis" w="46"></form-field>
<text-run size="17.200" h="26" w="28" style="margin-top:24px">Prix</text-run><form-field value="Prix Min" w="71"></form-field><form-field value="Prix Max" w="75" style="margin-top:10px"></form-field>
<green-button bw="340" w="98" label="Rechercher" style="margin-top:20px"></green-button>`);

def('scroll-bar', `<style>:host{display:flex;flex-direction:column;align-items:center;width:21px;background:#f1f1f1;flex:none}
.a{height:21px;display:flex;align-items:center;padding-top:1px;box-sizing:border-box}.t{width:17px;height:688px;background:#c1c1c1;margin-bottom:auto}</style>
<div class="a"><ui-icon name="up" w="10" h="6"></ui-icon></div><div class="t"></div><div class="a"><ui-icon name="dn" w="10" h="6"></ui-icon></div>`);

def('offers-page', `<style>
:host{display:flex;height:879px;flex:none;overflow:hidden}
.main{width:1899px;height:879px;overflow:hidden}
.body{display:flex;padding-left:20px;margin-top:-20px;gap:30px}
.list{display:flex;flex-direction:column;gap:30px;width:1429px}
</style><div class="main"><site-header></site-header>
<div class="body"><div class="list"><text-run size="29" weight="700" h="42" w="578" color="#1f2937" style="margin-bottom:18px">Annonces des fermes à vendre en Tunisie</text-run>
<offer-card place="BIZERT" aw="60" pw="53" cost="TND12,344.000" cw="164" desc="jfjbcbkjcbjb" dw="89" area="12344 m²" mw="75"></offer-card>
<offer-card cost="TND123,344.000" cw="177" desc="dhdvsvbs bh" dw="98" area="m²" mw="22"></offer-card>
<offer-card place="TUNIS" aw="55" pw="49" cost="TND12,345.000" cw="164"></offer-card>
</div><search-panel></search-panel></div></div><scroll-bar></scroll-bar>`);

/* Taskbar application slot; run = full | multi */
def('task-app', el => {
  const run = el.getAttribute('run'), act = el.hasAttribute('active');
  return `<style>:host{display:flex;flex-direction:column;align-items:center;width:62px;height:50px;flex:none}
  .b{width:62px;height:47px;display:flex;align-items:center;justify-content:center;padding-top:3px;box-sizing:border-box;${act ? 'background:rgba(255,255,255,.58)' : ''}}
  .u{display:flex;height:3px;width:${act ? 62 : 51}px;background:${run ? '#0078d7' : 'none'};justify-content:flex-end}
  .u i{width:${run === 'multi' ? 10 : 0}px;background:#66aee6}</style>
  <div class="b"><ui-icon name="${el.getAttribute('icon')}" w="${el.getAttribute('w') || 30}" h="${el.getAttribute('h') || 30}"></ui-icon></div><div class="u"><i></i></div>`;
});

def('task-bar', `<style>
:host{display:flex;align-items:center;height:50px;flex:none;position:relative;z-index:3;background:linear-gradient(90deg,#cee6ef 0,#cfe4ed 35%,#d0e2ed 62%,#d3dfeb 74%,#d5dcea 84%,#d9dcea 100%)}
.s{box-sizing:border-box;width:360px;height:50px;background:#fff;border:1px solid #c4c8ca;display:flex;align-items:center;padding-left:14px;margin-left:20px}
.k{display:flex;flex-direction:column;align-items:center;margin-left:13px;width:76px}
.n{position:relative;margin-left:23px}
.b{position:absolute;left:9px;top:8px;width:19px;height:19px;border:1px solid #777;border-radius:50%;background:#d8dbe2;display:flex;justify-content:center}
.l{width:1px;height:50px;background:#a3a9b4;margin-left:25px}
</style>
<ui-icon name="windows" w="20" style="margin-left:20px"></ui-icon>
<div class="s"><ui-icon name="search" w="20"></ui-icon><text-run size="19" h="48" w="211" color="#2b2b2b" style="margin-left:15px">Taper ici pour rechercher</text-run></div>
<ui-icon name="taskview" w="22" h="19" style="margin:0 22px 0 19px"></ui-icon>
<task-app icon="edge"></task-app><task-app icon="explorer" w="28" h="23" run="multi"></task-app><task-app icon="outlook"></task-app><task-app icon="chrome" active run="full"></task-app>
<task-app icon="nox" run="full"></task-app><task-app icon="film" run="full"></task-app><task-app icon="idea" run="multi"></task-app><task-app icon="cmd" w="28" h="23" run="multi"></task-app>
<task-app icon="vscode" run="multi"></task-app><task-app icon="photos" w="28" h="28" run="multi"></task-app><task-app icon="git" run="full"></task-app><task-app icon="xampp" run="full"></task-app><task-app icon="mongo" w="28" h="28" run="full"></task-app><task-app icon="notepad" w="29" h="28" run="full"></task-app>
<ui-icon name="weather" w="30" style="margin-left:158px"></ui-icon><text-run size="17.500" w="36" h="50" style="margin-left:11px" color="#111">16°C</text-run>
<ui-icon name="chevup" w="16" h="9" style="margin-left:33px"></ui-icon><ui-icon name="cam" w="16" h="20" style="margin-left:16px"></ui-icon><ui-icon name="battery" w="20" h="16" style="margin-left:10px"></ui-icon><ui-icon name="wifi" w="17" h="17" style="margin-left:12px"></ui-icon><ui-icon name="volume" w="20" h="16" style="margin-left:11px"></ui-icon>
<div class="k"><text-run size="14.300" h="23" w="35" color="#111">23:32</text-run><text-run size="14.300" h="23" w="76" color="#111">07/12/2024</text-run></div>
<div class="n"><ui-icon name="notif" w="20"></ui-icon><div class="b"><text-run size="13.500" h="19" color="#111">3</text-run></div></div><div class="l"></div>`);

def('desktop-screen', `<style>:host{display:flex;flex-direction:column;width:1920px;height:1080px;overflow:hidden;background:#fff}</style>
<tab-strip></tab-strip><address-bar></address-bar><bookmark-bar></bookmark-bar><offers-page></offers-page><task-bar></task-bar>`);
</script>
</body>
</html>
